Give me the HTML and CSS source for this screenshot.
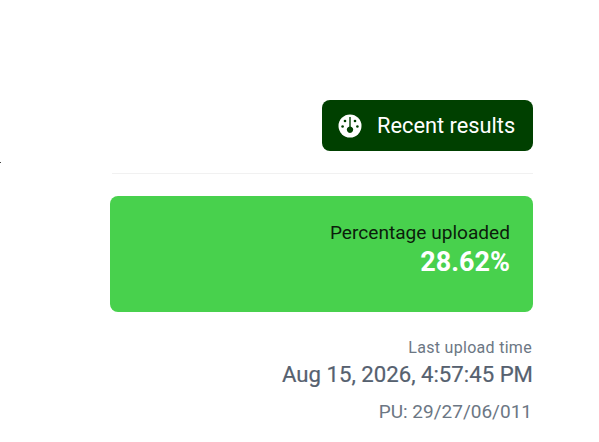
FILE: index.html
```html
<!DOCTYPE html>
<html lang="en">
<head>
    <meta charset="UTF-8">
    <title>Upload progress</title>
    <link rel="stylesheet" href="styles.css">
</head>
<body>
    <span class="speck"></span>
    <div class="panel">
        <div class="actions">
            <button class="results-btn">
                <svg class="gauge" viewBox="0 0 24 24" width="24" height="24">
                    <circle cx="12" cy="12" r="11.5" fill="#fff"/>
                    <rect x="11.3" y="3" width="1.4" height="12" fill="#004000"/>
                    <path d="M12 12.5a3.2 3.2 0 1 0 .01 0z" fill="#004000"/>
                    <circle cx="7" cy="7" r="1.3" fill="#004000"/>
                    <circle cx="17" cy="7" r="1.3" fill="#004000"/>
                    <circle cx="4.6" cy="12.5" r="1.3" fill="#004000"/>
                    <circle cx="19.4" cy="12.5" r="1.3" fill="#004000"/>
                </svg>
                <span>Recent results</span>
            </button>
        </div>
        <hr class="divider">
        <div class="stat-card">
            <div class="stat-label">Percentage uploaded</div>
            <div class="stat-value">28.62%</div>
        </div>
        <div class="meta">
            <div class="meta-label">Last upload time</div>
            <div class="meta-time">Aug 15, 2026, 4:57:45 PM</div>
            <div class="meta-pu">PU: 29/27/06/011</div>
        </div>
    </div>
</body>
</html>
```

FILE: styles.css
```css
html, body {
    height: 100%;
}
body {
    margin: 0;
    background: #fff;
    font-family: Roboto, "Liberation Sans", sans-serif;
    overflow: hidden;
}
.speck {
    position: absolute;
    left: 0;
    top: 162px;
    width: 1px;
    height: 1px;
    background: #444;
}
.panel {
    width: 423px;
    margin-left: 110px;
    padding-top: 100px;
}
.actions {
    display: flex;
    justify-content: flex-end;
}
.results-btn {
    display: flex;
    align-items: center;
    gap: 15px;
    width: 211px;
    height: 51px;
    padding: 0 0 0 16px;
    border: none;
    border-radius: 8px;
    background: #004000;
    color: #fff;
    font-family: inherit;
    font-size: 21.8px;
}
.gauge {
    flex: none;
}
.divider {
    height: 1px;
    margin: 22px 0 22px 2px;
    border: none;
    background: #f1f1f1;
}
.stat-card {
    height: 116px;
    box-sizing: border-box;
    padding: 25px 23px 0 0;
    border-radius: 8px;
    background: #48d14d;
    text-align: right;
}
.stat-label {
    font-size: 19.1px;
    line-height: 23px;
    color: #0b1d0b;
}
.stat-value {
    margin-top: 3px;
    font-size: 27px;
    line-height: 31px;
    font-weight: 700;
    color: #fff;
}
.meta {
    margin-top: 26px;
    text-align: right;
}
.meta-label {
    padding-right: 1px;
    font-size: 16px;
    line-height: 20px;
    letter-spacing: 0.3px;
    color: #6c7784;
}
.meta-time {
    margin-top: 3px;
    font-size: 22.2px;
    line-height: 26px;
    font-weight: 400;
    color: #56616f;
    -webkit-text-stroke: 0.2px #56616f;
}
.meta-pu {
    margin-top: 14px;
    padding-right: 1px;
    font-size: 19px;
    line-height: 22px;
    color: #6c7784;
}
```
